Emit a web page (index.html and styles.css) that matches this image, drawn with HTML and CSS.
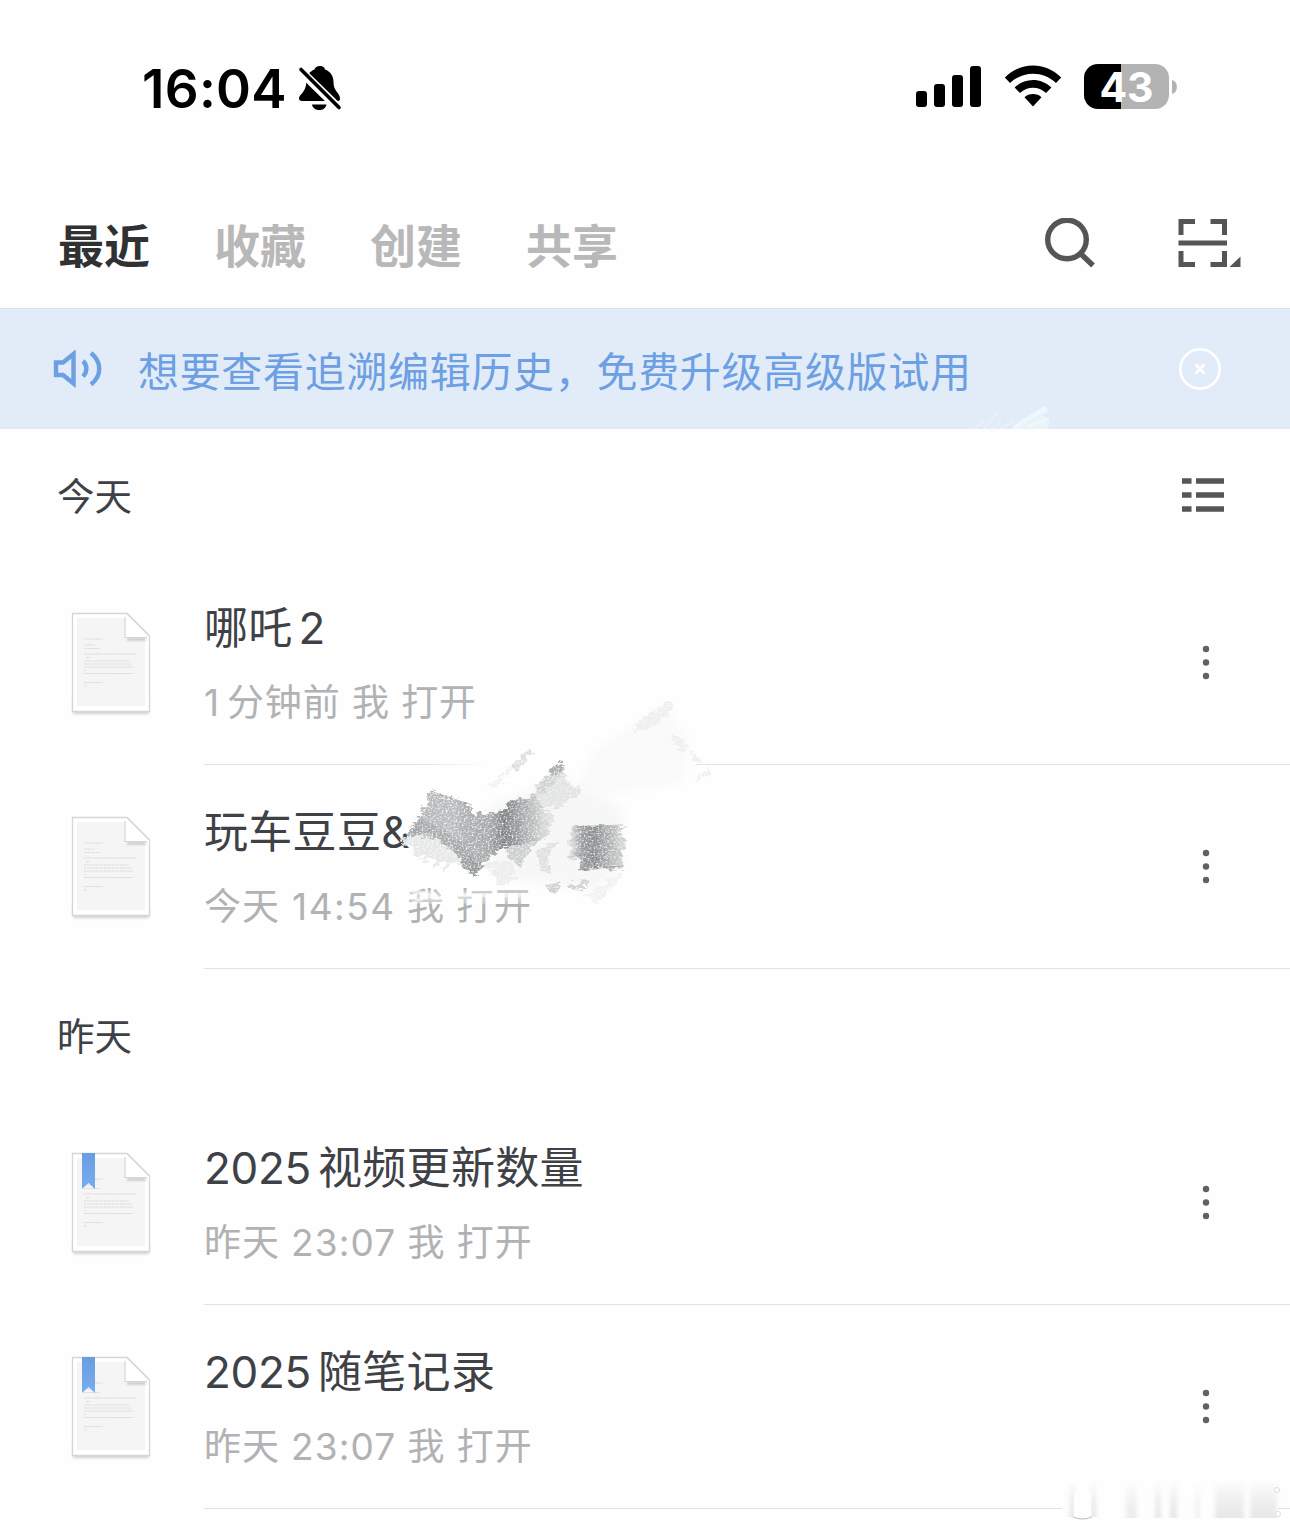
FILE: index.html
```html
<!DOCTYPE html>
<html lang="zh-CN">
<head>
    <meta charset="UTF-8">
    <meta name="viewport" content="width=device-width, initial-scale=1.0">
    <title>最近</title>
    <link rel="stylesheet" href="styles.css">
</head>
<body>
    <!-- shared shapes -->
    <svg class="defs" width="0" height="0">
        <defs>
            <linearGradient id="ribbon" x1="0" y1="0" x2="0" y2="1">
                <stop offset="0" stop-color="#6a9ce0"/>
                <stop offset="1" stop-color="#78adf0"/>
            </linearGradient>
            <filter id="soft" x="-20%" y="-20%" width="140%" height="140%">
                <feGaussianBlur stdDeviation="1.5"/>
            </filter>
            <symbol id="doc" viewBox="0 0 90 114">
                <path d="M7 90H83V106H7Z" fill="#000" opacity=".18" filter="url(#soft)"/>
                <path d="M6.500 5.500H61L83.500 28V103.500H6.500Z" fill="#fff" stroke="#d6d6d6" stroke-width="1.300"/>
                <path d="M11 10H59V31H79V98H11Z" fill="#f5f5f5"/>
                <path d="M61 29H80V32.500H61Z" fill="#000" opacity=".2" filter="url(#soft)"/>
                <path d="M59 6L82.500 28.500V30H59Z" fill="#fff"/>
                <path d="M59 9V29.500H81M61 5.500L83.500 28" fill="none" stroke="#d6d6d6" stroke-width="1.200"/>
                <g fill="none" stroke="#d2d2d2" stroke-width="1.200" stroke-dasharray="2 .7 3 .6 1.500 .5" opacity=".7">
                    <path d="M18 31H37M18 37H29M18 40.500H34M18 46H70M20 49.500H24M18 53H63M18 56H66M18 59H67M18 62.500H20M18 65.500H68M18 74.500H37M18 78H21"/>
                </g>
            </symbol>
            <symbol id="more" viewBox="0 0 8 36">
                <circle cx="4" cy="4" r="3.200"/>
                <circle cx="4" cy="17.500" r="3.200"/>
                <circle cx="4" cy="31" r="3.200"/>
            </symbol>
        </defs>
    </svg>

    <div class="status-bar">
        <div class="clock">
            <span class="time">16:04</span>
            <svg class="bell" width="44" height="46" viewBox="0 0 44 46">
                <path d="M22 1C25 1 26.500 2.500 27 4.500C32.500 6.500 35.500 11 35.500 17C35.500 27 42 27 42 34C42 35.500 41 36 39.500 36H4C2 36 1 35 1 33.500C1 29 8 28 8.300 17C8.500 10.500 11.500 6.500 16.500 4.500C17 2.500 19 1 22 1Z"/>
                <path d="M14 39.500H28.500C28 43 25 45 21.300 45S14.500 43 14 39.500Z"/>
                <path class="gap" d="M1 4.500L41 43.500"/>
                <path class="slash" d="M3 4.500L41 42.500"/>
            </svg>
        </div>
        <div class="signals">
            <svg width="66" height="42" viewBox="0 0 66 42">
                <rect x="0" y="25" width="11" height="16" rx="3"/>
                <rect x="18" y="18" width="11" height="23" rx="3"/>
                <rect x="36" y="9" width="11" height="32" rx="3"/>
                <rect x="54" y="0" width="11" height="41" rx="3"/>
            </svg>
            <svg class="wifi" width="58" height="42" viewBox="0 0 58 42">
                <path d="M0.800 12.500C16.500-3.500 41.500-3.500 57.200 12.500L52 18C39 5.700 19 5.700 6 18Z"/>
                <path d="M10.600 22.500C21 12.500 37 12.500 47.400 22.500L42 28C34.500 21 23.500 21 16 28Z"/>
                <path d="M20.500 32.300C25 28 33 28 37.500 32.300L29 41.500Z"/>
            </svg>
            <div class="battery">
                <span class="level">43</span>
                <svg class="cap" width="5" height="14" viewBox="0 0 5 14"><path d="M0 0C6.500 1.500 6.500 12.500 0 14Z"/></svg>
            </div>
        </div>
    </div>

    <div class="tabs">
        <div class="tab active">最近</div>
        <div class="tab">收藏</div>
        <div class="tab">创建</div>
        <div class="tab">共享</div>
        <div class="actions">
            <svg width="52" height="52" viewBox="0 0 52 52">
                <circle cx="22" cy="21.500" r="19.300" fill="none" stroke="#555" stroke-width="5.400"/>
                <path d="M35.500 35.500L48 47.500" stroke="#555" stroke-width="5.400"/>
            </svg>
            <svg width="64" height="50" viewBox="0 0 64 50">
                <path d="M3 17V3.500H17M32.500 3.500H46.500V17M3 33V46.500H17M32.500 46.500H46.500V33M.500 25H49" fill="none" stroke="#555" stroke-width="5"/>
                <path d="M62.500 38.500V49H51.500Z" fill="#555"/>
            </svg>
        </div>
    </div>

    <div class="notice">
        <svg class="speaker" width="50" height="38" viewBox="0 0 50 38">
            <path d="M3 12.500H10L20.500 4V33.500L10 25H3Z"/>
            <path d="M30 11C34.500 15 34.500 22 30 26.500M38 3C49 12 49 25.500 38 34.500"/>
        </svg>
        <span class="notice-text">想要查看追溯编辑历史，免费升级高级版试用</span>
        <svg class="close" width="44" height="44" viewBox="0 0 44 44">
            <circle cx="22" cy="22" r="19.700"/>
            <path d="M17.500 17.500L26.500 26.500M26.500 17.500L17.500 26.500"/>
        </svg>
        <svg class="chalk" width="90" height="24" viewBox="0 0 90 24">
            <path d="M4 24L15 16M14 24L28 7M22 24L32 15M30 24L44 16" fill="none" stroke-width="3" opacity=".35"/>
            <path d="M40 25L52 15L74 2L78 5L72 11L79 15L77 24Z" opacity=".7"/>
            <path d="M44 23L76 3M57 22L77 14" fill="none" stroke-width="4" opacity=".55"/>
        </svg>
    </div>

    <div class="section-title">
        <span>今天</span>
        <svg width="42" height="34" viewBox="0 0 42 34">
            <path d="M0 3H9.500M14 3H42M0 17H9.500M14 17H42M0 31H9.500M14 31H42" stroke="#555" stroke-width="5.600"/>
        </svg>
    </div>

    <div class="row">
        <svg class="doc" width="90" height="114"><use href="#doc"/></svg>
        <div class="info">
            <div class="name">哪吒<span class="num after">2</span></div>
            <div class="meta"><span class="one">1</span>分钟前 我 打开</div>
        </div>
        <svg class="more" width="8" height="36"><use href="#more"/></svg>
    </div>

    <div class="row">
        <svg class="doc" width="90" height="114"><use href="#doc"/></svg>
        <div class="info">
            <div class="name">玩车豆豆<span class="amp">&amp;</span></div>
            <div class="meta">今天 <span class="clock-wide">14:54</span> 我 打开</div>
        </div>
        <svg class="more" width="8" height="36"><use href="#more"/></svg>
        <!-- pencil scribble over the file name -->
        <svg class="scribble" width="340" height="240" viewBox="0 0 340 240">
            <defs>
                <filter id="grain" x="-5%" y="-5%" width="110%" height="110%">
                    <feTurbulence type="fractalNoise" baseFrequency=".5 .6" numOctaves="3" seed="4" result="noise"/>
                    <feColorMatrix in="noise" type="matrix" values="0 0 0 0 0  0 0 0 0 0  0 0 0 0 0  0 0 0 2.600 -.4" result="mask"/>
                    <feTurbulence type="fractalNoise" baseFrequency=".12 .25" numOctaves="3" seed="9" result="streak"/>
                    <feDisplacementMap in="SourceGraphic" in2="streak" scale="12" xChannelSelector="R" yChannelSelector="G" result="rough"/>
                    <feComposite in="rough" in2="mask" operator="in"/>
                    <feGaussianBlur stdDeviation=".45"/>
                </filter>
                <filter id="smudge" x="-20%" y="-20%" width="140%" height="140%"><feGaussianBlur stdDeviation="4"/></filter>
                <linearGradient id="stroke-a">
                    <stop offset="0" stop-color="#aaacad"/>
                    <stop offset=".3" stop-color="#b6b8b9"/>
                    <stop offset=".6" stop-color="#bcbebf"/>
                    <stop offset="1" stop-color="#a0a3a4"/>
                </linearGradient>
                <linearGradient id="stroke-b">
                    <stop offset="0" stop-color="#b0b2b3"/>
                    <stop offset=".35" stop-color="#a6a9aa"/>
                    <stop offset=".48" stop-color="#7f8384"/>
                    <stop offset=".7" stop-color="#acafb0"/>
                    <stop offset="1" stop-color="#e4e5e5"/>
                </linearGradient>
                <linearGradient id="stroke-c">
                    <stop offset="0" stop-color="#ececec"/>
                    <stop offset=".25" stop-color="#9b9e9f"/>
                    <stop offset=".45" stop-color="#8b8f90"/>
                    <stop offset=".7" stop-color="#b0b3b4"/>
                    <stop offset="1" stop-color="#d8d9d9"/>
                </linearGradient>
                <linearGradient id="erase">
                    <stop offset="0" stop-color="#fefefe" stop-opacity="0"/>
                    <stop offset=".25" stop-color="#fefefe"/>
                </linearGradient>
            </defs>
            <path d="M30 72H306V77H30Z" fill="url(#erase)"/>
            <path d="M205 60L275 15L284 30L302 55L290 95L210 105L180 108Z" fill="#fafafa" filter="url(#smudge)"/>
            <path d="M97 118L170 88L232 118L232 175L205 200L165 195L105 186Z" fill="#f7f7f7" filter="url(#smudge)"/>
            <g filter="url(#grain)">
                <path d="M240 38L279 9L284 18L262 38L250 42ZM282 42L300 56L292 64L284 55ZM300 62L308 66L316 74L304 72ZM306 88L322 78L318 86L306 92Z" fill="#eeefef"/>
                <path d="M97 98L135 62L142 60L138 68L108 94Z" fill="#f2f2f2"/>
                <path d="M118 78L137 60L143 62L126 80Z" fill="#dddede"/>
                <path d="M138 108L150 92L167 75L174 74L178 96L190 94L190 106L165 120Z" fill="#e2e3e3"/>
                <path d="M144 102L163 80L172 76L166 90L152 104Z" fill="#d0d2d2"/>
                <path d="M158 86L167 73L175 74L172 82Z" fill="#a9adae"/>
                <path d="M40 101L82 115V126L92 140L84 187L70 172L15 144L30 127Z" fill="url(#stroke-a)"/>
                <path d="M14 148L12 154L24 158L20 164L35 165L31 173L46 168L43 179L56 170L52 182L72 170L40 142Z" fill="#e6e7e7"/>
                <path d="M72 127L115 120L118 112L146 106L162 125V144L142 152L117 157L101 166L84 187L70 172L76 155Z" fill="url(#stroke-b)"/>
                <path d="M27 127L58 144L80 160L76 172L52 152L22 145Z" fill="#919495" opacity=".4"/>
                <path d="M70 170L78 168L92 174L84 187Z" fill="#868a8b" opacity=".5"/>
                <path d="M116 156L146 151L130 176L120 170Z" fill="#cdcfcf"/>
                <path d="M146 160L150 182L164 184L156 168L170 150Z" fill="#dfe0e0"/>
                <path d="M95 172L120 170L128 186L110 196Z" fill="#ededed"/>
                <path d="M180 136H234L231 141L236 156L231 163L234 178L188 180L190 170L178 168Z" fill="url(#stroke-c)"/>
                <path d="M160 202L153 194L170 193L168 203ZM178 194L200 190L194 199L182 200Z" fill="#cfd0d0"/>
                <path d="M196 206L232 180L226 194L206 214Z" fill="#f2f2f2"/>
            </g>
            <path d="M188 136.500L233 135M188 180L233 176M40 101L82 115" fill="none" stroke="#888c8d" stroke-width="1" opacity=".5"/>
            <path d="M16 207H142M34 202L52 212" stroke="#fefefe" stroke-width="10" opacity=".6" filter="url(#smudge)"/>
            <path d="M20 200L48 208M66 205H140M22 214L40 204" stroke="#fefefe" stroke-width="4" opacity=".6"/>
        </svg>
    </div>

    <div class="section-title">
        <span>昨天</span>
    </div>

    <div class="row">
        <svg class="doc" width="90" height="114">
            <use href="#doc"/>
            <path d="M16 5H29V41L22.500 35L16 41Z" fill="url(#ribbon)"/>
        </svg>
        <div class="info">
            <div class="name"><span class="num before">2025</span>视频更新数量</div>
            <div class="meta">昨天 <span class="clock-num">23:07</span> 我 打开</div>
        </div>
        <svg class="more" width="8" height="36"><use href="#more"/></svg>
    </div>

    <div class="row">
        <svg class="doc" width="90" height="114">
            <use href="#doc"/>
            <path d="M16 5H29V41L22.500 35L16 41Z" fill="url(#ribbon)"/>
        </svg>
        <div class="info">
            <div class="name"><span class="num before">2025</span>随笔记录</div>
            <div class="meta">昨天 <span class="clock-num">23:07</span> 我 打开</div>
        </div>
        <svg class="more" width="8" height="36"><use href="#more"/></svg>
        <svg class="watermark" width="230" height="52" viewBox="0 0 230 52">
            <defs>
                <linearGradient id="fade" x1="0" y1="0" x2="0" y2="1">
                    <stop offset="0" stop-color="#bbb" stop-opacity="0"/>
                    <stop offset=".5" stop-color="#bbb" stop-opacity=".26"/>
                    <stop offset="1" stop-color="#bbb" stop-opacity=".4"/>
                </linearGradient>
                <filter id="blur2" x="-50%" width="200%"><feGaussianBlur stdDeviation="2 .4"/></filter>
            </defs>
            <path d="M0 4H216V42H0Z" fill="#fefefe"/>
            <g fill="url(#fade)" filter="url(#blur2)">
                <path d="M8 4H13V40H8ZM29 4H34V40H29Z"/>
                <path d="M64 4H75V41H64Z" opacity=".7"/>
                <path d="M93 4H99V41H93ZM108 4H115V41H108Z" opacity=".9"/>
                <path d="M133 4H138V41H133Z" opacity=".5"/>
                <path d="M153 4H182V41H153ZM188 4H215V41H188Z" opacity=".85"/>
            </g>
            <path d="M12 16H29V40Q20 43 12 40Z" fill="#fefefe"/>
            <path d="M11 40Q20 44 30 40" fill="none" stroke="#bbb"/>
            <circle cx="215" cy="13" r="2.500" fill="#fff" stroke="#ddd"/>
            <circle cx="216" cy="37" r="2.500" fill="#fff" stroke="#ddd"/>
        </svg>
    </div>
</body>
</html>
```
FILE: styles.css
```css
body {
    margin: 0;
    width: 1290px;
    height: 1532px;
    overflow: hidden;
    background-color: #fefefe;
    color: #3e4145;
    font-family: Inter, "Noto Sans CJK SC", sans-serif;
}

svg {
    display: block;
    flex-shrink: 0;
}

.defs {
    position: absolute;
}

/* status bar */
.status-bar {
    display: flex;
    justify-content: space-between;
    box-sizing: border-box;
    height: 178px;
    padding: 64px 113px 0 142px;
}

.clock,
.signals {
    display: flex;
    align-items: flex-start;
}

.time {
    color: #000;
    font-size: 53px;
    font-weight: 600;
    line-height: 50px;
    width: 156px;
    letter-spacing: 0.3px;
    white-space: nowrap;
}

.bell {
    margin-top: 1px;
}

.bell .gap {
    stroke: #fefefe;
    stroke-width: 9;
}

.bell .slash {
    stroke: #000;
    stroke-width: 3.6;
    stroke-linecap: round;
}

.signals svg {
    margin-top: 2px;
}

.signals .wifi {
    margin: 1px 22px 0;
}

.battery {
    display: flex;
}

.level {
    width: 85px;
    height: 45px;
    border-radius: 14px;
    background: linear-gradient(to right, #000 37px, #b3b3b3 37px);
    color: #fff;
    font-size: 41px;
    font-weight: 650;
    line-height: 46px;
    text-align: center;
}

.signals .cap {
    margin: 16px 0 0 3px;
    fill: #b3b3b3;
}

/* tabs */
.tabs {
    display: flex;
    align-items: center;
    gap: 64px;
    box-sizing: border-box;
    height: 130px;
    padding: 5px 48px 0 58px;
}

.tab {
    width: 92px;
    color: #b8b8b8;
    font-size: 46px;
    font-weight: 700;
    line-height: 66px;
    white-space: nowrap;
}

.tab.active {
    color: #303133;
}

.actions {
    display: flex;
    gap: 81px;
    margin-left: auto;
    padding-bottom: 3px;
}

/* notice bar */
.notice {
    position: relative;
    display: flex;
    align-items: center;
    box-sizing: border-box;
    height: 121px;
    padding: 0 68px 0 53px;
    border-top: 1px solid #d9e1e8;
    background-color: #e2ecf8;
}

.speaker {
    fill: none;
    stroke: #6c9fe3;
    stroke-width: 4.4;
}

.notice-text {
    margin-left: 35px;
    color: #6c9fe3;
    font-size: 41px;
    letter-spacing: 0.68px;
    white-space: nowrap;
}

.close {
    margin-left: auto;
    fill: none;
    stroke: #fff;
    stroke-width: 2.6;
}

.chalk {
    position: absolute;
    left: 970px;
    bottom: 0;
    fill: #edf6fb;
    stroke: #f2fafd;
}

/* list */
.section-title {
    display: flex;
    align-items: center;
    justify-content: space-between;
    height: 132px;
    padding: 0 66px 0 57px;
    font-size: 37.5px;
}

.section-title span {
    padding-bottom: 3px;
}

.row {
    position: relative;
    display: flex;
    align-items: center;
    height: 204px;
    padding-left: 66px;
}

.doc {
    margin: 4px 48px 0 0;
}

.info {
    flex: 1;
    box-sizing: border-box;
    height: 204px;
    padding-top: 34px;
    border-bottom: 1px solid #e3e3e3;
    white-space: nowrap;
}

.name {
    font-size: 44px;
    line-height: 66px;
    letter-spacing: 0.3px;
}

.num {
    letter-spacing: -0.3px;
}

.num.after {
    margin-left: 6px;
}

.num.before {
    margin-right: 7px;
}

.meta {
    margin-top: 14px;
    color: #b1b2b3;
    font-size: 37px;
    line-height: 56px;
    letter-spacing: 0.9px;
}

.one {
    margin-right: 7px;
}

.clock-wide {
    margin-left: 1px;
    letter-spacing: 1.5px;
}

.clock-num {
    letter-spacing: 1.1px;
}

.more {
    position: absolute;
    right: 80px;
    fill: #616161;
}

.scribble {
    position: absolute;
    left: 390px;
    top: -75px;
}

.watermark {
    position: absolute;
    right: -2px;
    bottom: -20px;
}
```
